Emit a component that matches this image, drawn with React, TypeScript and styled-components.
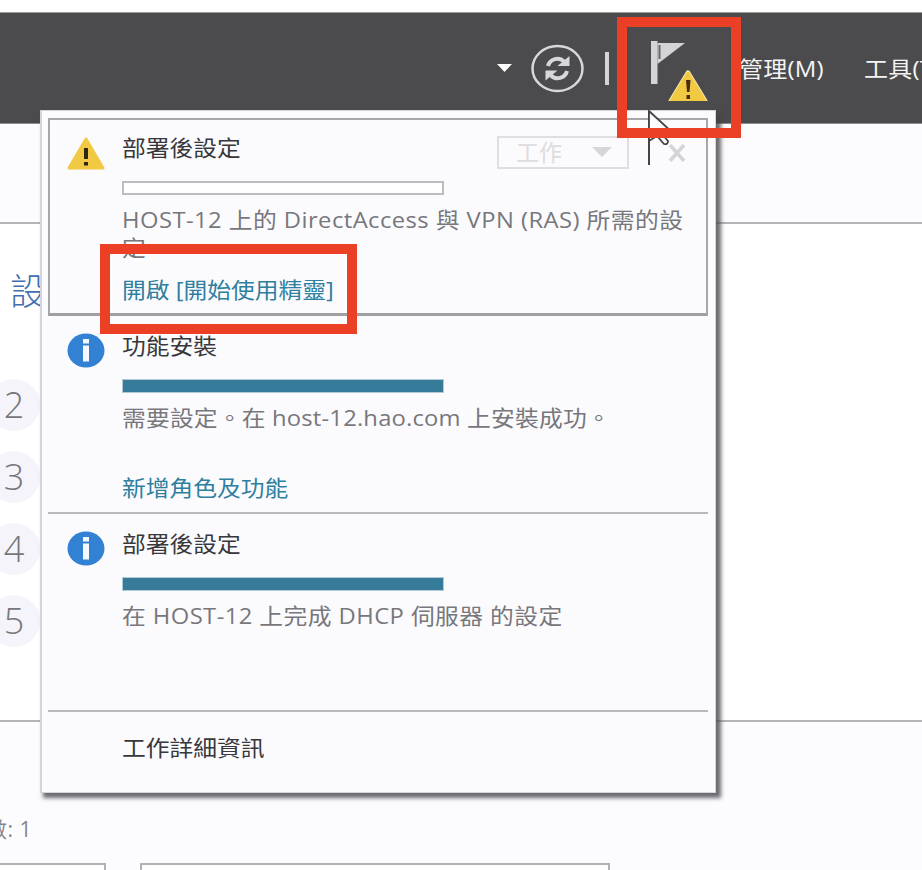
import React from "react";
import styled, { createGlobalStyle } from "styled-components";

const GlobalStyle = createGlobalStyle`
  * { box-sizing: border-box; }
  body {
    margin: 0;
    overflow: hidden;
    background: #fff;
    font-family: "Open Sans", "Noto Sans CJK TC", sans-serif;
  }
`;

const Page = styled.div`
  position: relative;
  display: flex;
  flex-direction: column;
  width: 922px;
  height: 870px;
  padding-top: 12px;
  overflow: hidden;
`;

const Header = styled.header`
  display: flex;
  align-items: center;
  flex: none;
  height: 112px;
  padding-left: 497px;
  background: #4b4b4d;
  border-top: 1px solid #9a9a9c;
  border-bottom: 1px solid #8c8c8e;
  white-space: nowrap;
`;

const HeaderIcon = styled.svg<{ $gap: number }>`
  flex: none;
  margin-right: ${(p) => p.$gap}px;
`;

const Separator = styled.div`
  flex: none;
  width: 4px;
  height: 33px;
  margin-right: 42px;
  background: #d4d4d6;
`;

const MenuItem = styled.span<{ $width: number }>`
  flex: none;
  width: ${(p) => p.$width}px;
  font-size: 22px;
  line-height: 30px;
  color: #f4f4f4;
  letter-spacing: 0.2px;
  transform: scaleX(1.09);
  transform-origin: left center;
`;

const Band = styled.section<{ $height: number; $tint?: boolean }>`
  display: flex;
  flex-direction: column;
  flex: none;
  height: ${(p) => p.$height}px;
  background: ${(p) => (p.$tint ? "#fcfcfe" : "#ffffff")};
  border-bottom: 2px solid #b4b4b8;
`;

const SectionTitle = styled.h2`
  margin: 42px 0 0 10px;
  font-size: 36px;
  font-weight: 300;
  line-height: 52px;
  color: #3f6fae;
`;

const Steps = styled.div`
  display: flex;
  flex-direction: column;
  gap: 20px;
  margin: 61px 0 0 -12px;
`;

const Step = styled.div`
  display: flex;
  align-items: center;
  justify-content: center;
  width: 52px;
  height: 52px;
  border-radius: 50%;
  background: #f4f4fa;
  font-size: 36px;
  font-weight: 300;
  line-height: 1;
  color: #77777b;
`;

const Bottom = styled.section`
  display: flex;
  flex-direction: column;
  flex: 1;
  justify-content: space-between;
  padding-top: 93px;
  background: #fcfcfe;
`;

const Count = styled.div`
  margin-left: -14px;
  font-size: 21px;
  line-height: 28px;
  letter-spacing: 0.5px;
  color: #85858a;
`;

const Tiles = styled.div`
  display: flex;
  gap: 34px;
`;

const Tile = styled.div<{ $width: number }>`
  flex: none;
  width: ${(p) => p.$width}px;
  height: 7px;
  background: #fff;
  border: 2px solid #b2b2b6;
  border-bottom: 0;
  margin-left: ${(p) => (p.$width < 120 ? -4 : 0)}px;
`;

const Panel = styled.aside`
  position: absolute;
  left: 40px;
  top: 110px;
  width: 676px;
  height: 683px;
  display: flex;
  flex-direction: column;
  padding: 7px 7px 0 6px;
  background: #fbfbfe;
  border: 1px solid #d4d4dc;
  border-left-width: 2px;
  box-shadow: 4px 4px 4px 1px rgba(65, 65, 72, 0.78);
`;

const Task = styled.article<{ $selected?: boolean }>`
  display: grid;
  grid-template-columns: 73px 1fr;
  flex: none;
  height: 198px;
  border: ${(p) => (p.$selected ? "2px solid #a7a7ab" : "0 solid #b8b8be")};
  border-bottom: ${(p) => (p.$selected ? "3px solid #a0a0a4" : "2px solid #b8b8be")};
  padding-left: ${(p) => (p.$selected ? 0 : 2)}px;
`;

const IconCell = styled.div`
  padding: 17px 0 0 17px;
`;

const TaskBody = styled.div<{ $top: number }>`
  display: flex;
  flex-direction: column;
  align-items: flex-start;
  margin-left: -1px;
  padding-top: ${(p) => p.$top}px;
`;

const TitleRow = styled.div`
  display: flex;
  justify-content: space-between;
  align-items: flex-start;
  width: 564px;
  height: 48px;
`;

const Label = styled.span<{ $color?: string; $spacing?: number }>`
  flex: none;
  display: block;
  font-size: 22px;
  line-height: 28px;
  color: ${(p) => p.$color ?? "#38383c"};
  letter-spacing: ${(p) => p.$spacing ?? 0}px;
  transform: scaleX(1.08);
  transform-origin: left center;
  white-space: nowrap;
`;

const Description = styled(Label)`
  height: 70px;
  margin-top: 10px;
  white-space: pre;
`;

const TaskActions = styled.div`
  display: flex;
  align-items: center;
  gap: 39px;
  margin-top: 3px;
`;

const TaskSelect = styled.div`
  display: flex;
  align-items: center;
  justify-content: space-between;
  width: 132px;
  height: 33px;
  padding: 0 15px 2px 17px;
  border: 2px solid #dedee3;
  color: #dcdce1;
  font-size: 23px;
  line-height: 28px;
`;

const Progress = styled.div<{ $done?: boolean }>`
  width: 322px;
  height: 14px;
  background: ${(p) => (p.$done ? "#367b99" : "#ffffff")};
  border: ${(p) => (p.$done ? "1px solid #b3c9d3" : "2px solid #bdbdc0")};
`;

const Details = styled.footer`
  margin: 21px 0 0 74px;
`;

const Highlight = styled.div<{ $x: number; $y: number; $w: number; $h: number }>`
  position: absolute;
  left: ${(p) => p.$x}px;
  top: ${(p) => p.$y}px;
  width: ${(p) => p.$w}px;
  height: ${(p) => p.$h}px;
  border: 10px solid #eb4025;
`;

const Pointer = styled.svg`
  position: absolute;
  left: 646px;
  top: 109px;
`;

const WarningIcon = () => (
  <svg width="38" height="33" viewBox="0 0 38 33">
    <path d="M19 2 36 31H2Z" fill="#f2c943" stroke="#f2c943" strokeWidth="3" strokeLinejoin="round" />
    <path d="M17 11h4v11h-4zM17 25h4v3.500h-4z" fill="#302812" />
  </svg>
);

const InfoIcon = () => (
  <svg width="38" height="35" viewBox="0 0 38 35">
    <ellipse cx="19" cy="17.500" rx="18.500" ry="17" fill="#3381d3" />
    <path d="M16 6h6v4.500h-6zM16 12.500h6v16h-6z" fill="#f3f9ff" />
  </svg>
);

type TaskData = {
  title: string;
  description: string;
  spacing: number;
  link?: string;
  warning?: boolean;
};

const tasks: TaskData[] = [
  {
    title: "部署後設定",
    description: "HOST-12 上的 DirectAccess 與 VPN (RAS) 所需的設\n定",
    spacing: 0.42,
    link: "開啟 [開始使用精靈]",
    warning: true,
  },
  {
    title: "功能安裝",
    description: "需要設定。在 host-12.hao.com 上安裝成功。",
    spacing: 0.18,
    link: "新增角色及功能",
  },
  { title: "部署後設定", description: "在 HOST-12 上完成 DHCP 伺服器 的設定", spacing: 0.4 },
];

const TaskItem = ({ title, description, spacing, link, warning }: TaskData) => (
  <Task $selected={warning}>
    <IconCell>{warning ? <WarningIcon /> : <InfoIcon />}</IconCell>
    <TaskBody $top={warning ? 13 : 15}>
      <TitleRow>
        <Label>{title}</Label>
        {warning && (
          <TaskActions>
            <TaskSelect>
              工作
              <svg width="20" height="10">
                <path d="M0 0h20L10 10Z" fill="#d5d5da" />
              </svg>
            </TaskSelect>
            <svg width="18" height="18">
              <path d="m2 1 14 16M16 1 2 17" stroke="#d3d3d8" strokeWidth="3.500" />
            </svg>
          </TaskActions>
        )}
      </TitleRow>
      <Progress $done={!warning} />
      <Description $color="#77777c" $spacing={spacing}>{description}</Description>
      {link && <Label $color="#2f7f9f">{link}</Label>}
    </TaskBody>
  </Task>
);

export default function App() {
  return (
    <>
      <GlobalStyle />
      <Page lang="zh-Hant">
        <Header>
          <HeaderIcon $gap={19} width="15" height="8">
            <path d="M0 0h15L7.500 8Z" fill="#fff" />
          </HeaderIcon>
          <HeaderIcon $gap={21} width="53" height="49" viewBox="0 0 53 49">
            <ellipse cx="26.500" cy="24.500" rx="25" ry="22.500" fill="none" stroke="#d8d8da" strokeWidth="2.500" />
            <path d="M17 22c2-7.500 11-9.500 16-4.500M36 27c-2 7.500-11 9.500-16 4.500" fill="none" stroke="#d8d8da" strokeWidth="4" />
            <path d="M38.500 12v10H26.500ZM14.500 36.500v-10h12Z" fill="#d8d8da" />
          </HeaderIcon>
          <Separator />
          <HeaderIcon $gap={28} width="60" height="66" viewBox="0 0 60 66">
            <path d="M0 6h6.500v43H0z" fill="#d4d4d6" />
            <path d="M6.500 8H34L6.500 29Z" fill="#d4d4d6" />
            <path d="M8.500 10v14" stroke="#69696b" strokeWidth="2" />
            <path d="M37 38 54 66H20Z" fill="#f2c943" stroke="#f8e8ae" strokeWidth="5" strokeLinejoin="round" />
            <path d="M37 38 54 66H20Z" fill="#f2c943" stroke="#f2c943" strokeWidth="3" strokeLinejoin="round" />
            <path d="M35 45h4.500l-1 12h-2.500zM35.500 60h3.500v4h-3.500z" fill="#4b2a12" />
          </HeaderIcon>
          <MenuItem $width={125}>管理(M)</MenuItem>
          <MenuItem $width={80}>工具(T)</MenuItem>
        </Header>
        <Band $height={100} $tint />
        <Band $height={498}>
          <SectionTitle>設定</SectionTitle>
          <Steps>
            {[2, 3, 4, 5].map((n) => (
              <Step key={n}>{n}</Step>
            ))}
          </Steps>
        </Band>
        <Bottom>
          <Count>數: 1</Count>
          <Tiles>
            <Tile $width={110} />
            <Tile $width={470} />
          </Tiles>
        </Bottom>
        <Panel>
          {tasks.map((task, i) => (
            <TaskItem key={i} {...task} />
          ))}
          <Details>
            <Label>工作詳細資訊</Label>
          </Details>
        </Panel>
        <Pointer width="28" height="60" viewBox="0 0 28 60">
          <path d="M3 2v54" stroke="#303034" strokeWidth="1.800" />
          <path d="M3 2 27 24H15l7 8q0 4-4 3l-7-8-8 5Z" fill="#fbfbfe" stroke="#444448" strokeWidth="1.800" />
        </Pointer>
        <Highlight $x={617} $y={17} $w={124} $h={121} />
        <Highlight $x={100} $y={244} $w={257} $h={90} />
      </Page>
    </>
  );
}
